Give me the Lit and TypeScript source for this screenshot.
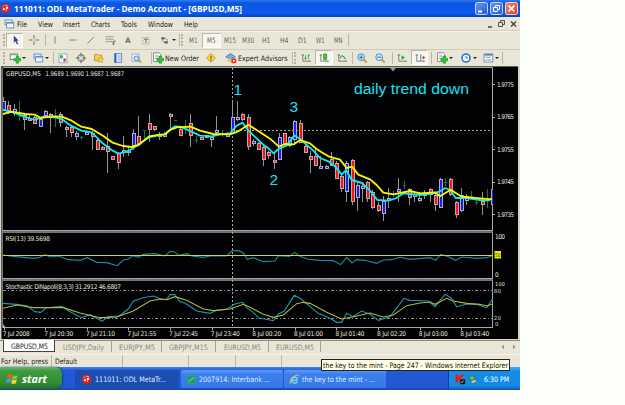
import {LitElement, html, svg, css} from 'lit';
import {customElement} from 'lit/decorators.js';
import {classMap} from 'lit/directives/class-map.js';
import {styleMap} from 'lit/directives/style-map.js';

// Chart series are stored in thirds of a pixel.
const UNIT = 3;
const STEP = 5.2;

type Kind = 'b' | 'r' | 'g';
type Candle = [number, number, number, number, Kind];

// high, body top, body bottom, low, kind
const CANDLES: Candle[] = [
  [98, 110, 138, 140, 'b'], [110, 122, 140, 150, 'r'], [120, 135, 150, 155, 'b'],
  [110, 155, 155, 172, 'g'], [148, 152, 168, 198, 'r'], [150, 162, 166, 170, 'r'],
  [155, 160, 179, 181, 'r'], [158, 165, 188, 190, 'b'], [137, 140, 156, 160, 'b'],
  [147, 150, 158, 208, 'r'], [135, 155, 155, 190, 'g'], [145, 150, 178, 188, 'r'],
  [185, 190, 198, 218, 'r'], [185, 190, 208, 218, 'r'], [200, 208, 218, 228, 'b'],
  [216, 218, 218, 228, 'g'], [198, 203, 208, 208, 'b'], [200, 208, 218, 258, 'r'],
  [225, 228, 258, 258, 'r'], [245, 248, 258, 258, 'r'], [208, 245, 265, 326, 'r'],
  [275, 277, 287, 287, 'r'], [265, 268, 297, 316, 'r'], [215, 257, 263, 278, 'b'],
  [245, 257, 262, 275, 'b'], [195, 208, 245, 258, 'b'], [157, 217, 240, 240, 'r'],
  [197, 199, 199, 230, 'g'], [150, 178, 198, 235, 'r'], [185, 187, 199, 200, 'r'],
  [205, 210, 217, 229, 'b'], [205, 210, 212, 212, 'b'], [147, 150, 160, 200, 'r'],
  [168, 169, 169, 170, 'g'], [190, 196, 217, 217, 'r'], [168, 188, 188, 210, 'g'],
  [149, 178, 217, 248, 'r'], [215, 227, 227, 237, 'g'], [218, 220, 227, 228, 'r'],
  [212, 213, 217, 218, 'b'], [215, 220, 227, 248, 'b'], [157, 198, 207, 212, 'b'],
  [198, 209, 209, 218, 'g'], [205, 210, 217, 218, 'b'], [110, 160, 210, 210, 'b'],
  [110, 160, 168, 170, 'b'], [148, 150, 168, 172, 'r'], [149, 160, 248, 258, 'r'],
  [225, 230, 239, 247, 'b'], [235, 238, 258, 258, 'r'], [240, 248, 287, 306, 'r'],
  [262, 265, 277, 285, 'r'], [265, 287, 297, 316, 'r'], [208, 218, 287, 287, 'b'],
  [207, 208, 240, 248, 'r'], [215, 218, 246, 248, 'b'], [168, 170, 228, 238, 'b'],
  [168, 178, 238, 238, 'r'], [238, 246, 266, 267, 'r'], [262, 277, 287, 326, 'r'],
  [250, 276, 306, 306, 'r'], [275, 305, 315, 316, 'b'], [303, 305, 315, 315, 'b'],
  [265, 285, 305, 305, 'r'], [290, 296, 345, 346, 'r'], [330, 335, 374, 385, 'r'],
  [290, 296, 384, 413, 'b'], [285, 287, 413, 422, 'r'], [350, 364, 403, 442, 'b'],
  [355, 365, 373, 413, 'b'], [350, 353, 404, 414, 'r'], [378, 384, 433, 434, 'r'],
  [415, 422, 442, 443, 'r'], [395, 412, 451, 472, 'b'], [373, 403, 408, 433, 'r'],
  [380, 390, 390, 400, 'g'], [343, 374, 384, 413, 'b'], [352, 363, 363, 375, 'g'],
  [373, 375, 403, 423, 'r'], [385, 390, 394, 413, 'b'], [385, 403, 412, 413, 'b'],
  [378, 388, 395, 404, 'b'], [372, 375, 393, 413, 'r'], [385, 393, 423, 442, 'r'],
  [343, 346, 432, 432, 'b'], [343, 354, 354, 365, 'g'], [343, 346, 394, 395, 'r'],
  [410, 413, 452, 461, 'r'], [373, 393, 442, 443, 'b'], [390, 395, 412, 422, 'b'],
  [382, 397, 397, 402, 'g'], [400, 413, 413, 423, 'g'], [383, 412, 422, 452, 'r'],
  [375, 405, 405, 433, 'g'], [372, 375, 422, 432, 'b'],
];

const FAST_MA = '11,138 42,146 73,158 104,168 130,158 166,160 185,165 213,185 244,200 275,205 306,236 338,260 355,269 385,262 410,245 447,220 480,213 495,211 509,198 525,187 540,188 560,196 600,215 635,217 660,211 690,208 710,185 728,176 745,200 775,228 790,242 805,253 821,268 835,255 860,245 883,214 900,225 940,260 960,282 985,292 1008,310 1025,332 1038,318 1055,348 1086,357 1110,380 1132,408 1165,410 1190,402 1210,388 1260,393 1300,388 1320,382 1336,372 1350,378 1367,402 1400,402 1440,408 1465,410 1476,402';
const SLOW_MA = '9,150 35,143 75,150 104,152 122,162 155,157 185,158 215,170 244,188 275,195 310,216 338,236 369,246 395,249 416,243 447,217 480,212 495,211 510,198 530,190 572,188 600,200 640,210 690,211 715,202 745,182 785,208 810,224 837,248 855,240 882,241 900,228 930,238 950,255 965,265 985,277 1020,287 1040,312 1056,308 1075,332 1110,346 1130,363 1150,386 1180,391 1230,381 1260,388 1305,385 1320,397 1352,377 1385,398 1440,403 1476,406';
const RSI = '9,90 40,94 70,97 105,100 120,97 135,89 150,96 175,93 205,104 240,106 262,98 290,112 320,113 352,122 370,105 385,102 400,92 415,97 430,88 465,86 495,93 510,79 522,80 537,91 560,86 575,93 610,97 630,93 680,93 697,77 715,77 730,84 742,103 760,98 790,110 825,108 835,92 868,94 884,82 900,94 925,103 960,106 1000,107 1022,119 1040,97 1056,114 1070,104 1095,106 1130,115 1150,105 1175,104 1200,97 1230,103 1265,100 1290,98 1307,106 1322,88 1345,95 1367,106 1385,96 1430,100 1460,98 1478,92';
const STOCH_K = '9,235 50,238 80,242 105,260 122,262 140,248 185,244 210,260 245,278 270,269 290,280 306,289 325,275 355,274 385,252 400,228 430,218 460,213 490,224 500,222 512,208 525,209 540,230 555,234 590,258 630,265 650,256 680,253 705,237 728,232 740,248 760,262 775,278 820,287 835,267 852,259 883,211 900,220 955,265 990,280 1010,292 1025,292 1040,265 1058,275 1085,258 1110,268 1135,286 1170,275 1212,220 1230,226 1285,228 1305,245 1335,208 1353,218 1370,245 1400,237 1430,238 1460,248 1478,222';
const STOCH_D = '9,250 50,240 100,248 140,248 190,248 240,264 300,278 350,276 400,258 450,228 480,222 500,224 525,215 560,226 610,252 640,257 690,252 730,238 750,247 790,268 820,277 850,270 890,236 910,232 930,235 980,262 1025,282 1060,275 1110,264 1150,276 1180,270 1220,242 1260,234 1290,231 1305,238 1340,220 1360,228 1400,235 1440,238 1460,243 1478,237';

const PRICES: [string, number][] = [
  ['1.9775', 84], ['1.9765', 116.6], ['1.9755', 149], ['1.9745', 181.6], ['1.9735', 214],
];

const TIMES = [
  '7 Jul 2008', '7 Jul 20:30', '7 Jul 21:10', '7 Jul 21:55', '7 Jul 22:45', '7 Jul 23:40',
  '8 Jul 00:20', '8 Jul 01:00', '8 Jul 01:40', '8 Jul 02:20', '8 Jul 03:00', '8 Jul 03:40',
];

// label, gap before it, label width
const MENUS: [string, number, number][] = [
  ['File', 2, 10], ['View', 11, 15], ['Insert', 10, 17], ['Charts', 11, 19],
  ['Tools', 11, 16], ['Window', 11, 25], ['Help', 11, 14],
];

const TABS: [string, number, number][] = [
  ['USDJPY,Daily', 57, 41], ['EURJPY,M5', 50, 36], ['GBPJPY,M15', 54, 39],
  ['EURUSD,M5', 53, 37], ['EURUSD,M5', 52, 38],
];

const PERIODS = ['M1', 'M5', 'M15', 'M30', 'H1', 'H4', 'D1', 'W1', 'MN'];

const label = (text: string, width: number) => html`
  <svg class="label" width=${width} height="12">
    <text x="0" y="9" textLength=${width} lengthAdjust="spacingAndGlyphs">${text}</text>
  </svg>
`;

const plus = svg`<path d="M9 5h3v3h3v3h-3v3H9v-3H6V8h3z" fill="#2fc52f" stroke="#138a1c" stroke-width=".7"/>`;
const axes = svg`<path d="M3.500 3v8.500H13M2.500 4.500l1-1.500 1 1.500M12 10.500l1 1-1 1" fill="none" stroke="#5c6c68"/>`;
const sheet = svg`<path d="M2 1h7l2 2v9H2z" fill="#fff" stroke="#5c7886"/><path d="M4 4h4M4 6h5M4 8h5" stroke="#789" stroke-width=".8"/>`;

const ICONS: Record<string, unknown> = {
  arrow: svg`<path d="M6 2v9l2-2 2 4 1.500-1-2-3.500H12z" fill="#354a8c"/>`,
  cross: svg`<path d="M7.500 1v5m0 3v5M1 7.500h5m3 0h5" stroke="#777568" stroke-width="1.200"/>`,
  vline: svg`<path d="M7.500 3v9" stroke="#6b695f"/>`,
  hline: svg`<path d="M3 7.500h9" stroke="#6b695f"/>`,
  diag: svg`<path d="M3 12l8-8" stroke="#6b695f"/>`,
  fibo: svg`<path d="M2 3.500h10M2 6.500h10M2 9.500h8" stroke="#6b695f" stroke-dasharray="1.500 .6"/><path d="M11.500 14V9h3m-3 2.500h2" fill="none" stroke="#444"/>`,
  text: svg`<text x="4" y="11.500" font-size="9.500" font-weight="bold" fill="#69675e">A</text>`,
  textbox: svg`<rect x="3.500" y="4.500" width="8" height="8" fill="none" stroke="#8b897d" stroke-dasharray="1 1"/><path d="M5 6.500h5M7.500 6.500v5" stroke="#69675e" stroke-width="1.200"/>`,
  marks: svg`<path d="M3 4h4v3H3zM7 9h4v3H7z" fill="#4e5e5a"/><path d="M8 5l3 3M4 8l3 3" stroke="#4e5e5a"/>`,
  newchart: svg`<rect x="1.500" y="2.500" width="9" height="7" fill="#fff" stroke="#4b8068"/><path d="M2 3.500h8" stroke="#3d9c68"/>${plus}`,
  profiles: svg`<rect x="2.500" y="2.500" width="9" height="6" fill="#dceafc" stroke="#4f81c4"/><rect x="4.500" y="5.500" width="9" height="7" fill="#eef6ff" stroke="#4f81c4"/><path d="M5 6.500h8" stroke="#4f81c4"/>`,
  market: svg`<rect x="2.500" y="2.500" width="10" height="11" fill="#fff" stroke="#6a9fd0"/><path d="M4 7l2-3 2 3z" fill="#18a030"/><path d="M4 4h3v4H4z" fill="#2aab40"/><path d="M8 8h3v4H8z" fill="#e5372e"/>`,
  target: svg`<circle cx="7.500" cy="7.500" r="4" fill="none" stroke="#666b70" stroke-width="1.300"/><path d="M7.500 1v5m0 3v5M1 7.500h5m3 0h5" stroke="#666b70" stroke-width="1.300"/>`,
  star: svg`<path d="M2 3h4l1 1h4v7H2z" fill="#f4ce62" stroke="#b88922"/><path d="M9.500 5.500l1.300 2.500 2.700.3-2 2 .6 2.700-2.600-1.300L7 13l.5-2.700-2-2 2.700-.3z" fill="#ffd64a" stroke="#c28c1e" stroke-width=".7"/>`,
  book: svg`<path d="M3 2h9v11H3z" fill="#e4f0ff" stroke="#3e78bd"/><path d="M4.500 2v11" stroke="#2c5fae" stroke-width="2"/><path d="M7 5h4M7 7.500h4M7 10h4" stroke="#75a2d8"/>`,
  tester: svg`<rect x="2.500" y="2.500" width="9" height="9" fill="#eef5ff" stroke="#7ca3d0"/><circle cx="8" cy="8" r="3" fill="#bddcf8" stroke="#4a7cba"/><path d="M10 10l4 3" stroke="#bd8d36" stroke-width="1.800"/>`,
  order: svg`${sheet}${plus}`,
  alert: svg`<path d="M7.500 2l5.500 5.500L7.500 13 2 7.500z" fill="#ffd23b" stroke="#b98c12"/><path d="M7.500 5v3.500m0 1v1.300" stroke="#7a4c00" stroke-width="1.400"/>`,
  expert: svg`<path d="M1 6l6-4 6 4-6 3z" fill="#6bb1e8" stroke="#3876b0"/><path d="M3 8v3l4 2 3-2V8z" fill="#edc65e"/><rect x="8" y="8" width="6" height="6" rx="1" fill="#e03030"/><rect x="10" y="10" width="2" height="2" fill="#fff"/>`,
  bars: svg`${axes}<path d="M7 4v6M5.500 8H7M10.500 3v6m0-5H12" stroke="#238b38"/>`,
  candles: svg`${axes}<path d="M9 1v10" stroke="#168b1c"/><rect x="7" y="3" width="4" height="6" fill="#2ed431" stroke="#168b1c" stroke-width=".7"/>`,
  line: svg`${axes}<path d="M5 8q2-5 4-2.500l3 3" fill="none" stroke="#2e9b38" stroke-width="1.300"/>`,
  zoomin: svg`<path d="M9.500 9.500l4 3.500" stroke="#c8a23e" stroke-width="2.500"/><circle cx="6.500" cy="6.500" r="4.200" fill="#d3ebff" stroke="#4385cc" stroke-width="1.200"/><path d="M6.500 4v5M4 6.500h5" stroke="#2f6db8" stroke-width="1.300"/>`,
  zoomout: svg`<path d="M9.500 9.500l4 3.500" stroke="#c8a23e" stroke-width="2.500"/><circle cx="6.500" cy="6.500" r="4.200" fill="#d3ebff" stroke="#4385cc" stroke-width="1.200"/><path d="M4 6.500h5" stroke="#2f6db8" stroke-width="1.300"/>`,
  scroll: svg`${axes}<path d="M7 4l4 3-4 3z" fill="#27a244"/>`,
  shift: svg`${axes}<path d="M8.500 3v8" stroke="#3471bd" stroke-width="1.200"/><path d="M10 7h4M12 5v4" stroke="#df3426" stroke-width="1.200"/>`,
  indicators: svg`${sheet}${plus}`,
  clock: svg`<circle cx="7.500" cy="7.500" r="5" fill="#eef7ff" stroke="#2773cc" stroke-width="2"/><path d="M7.500 4.500v3H10" fill="none" stroke="#456"/>`,
  template: svg`<rect x="2.500" y="2.500" width="11" height="10" fill="#fff" stroke="#4b7fbf"/><path d="M3 3.500h10" stroke="#4b7fbf" stroke-width="2"/><path d="M4 7l2-1 2 1 3-1" fill="none" stroke="#d24b36"/><path d="M4 10.500l3-1 2 1 3-1.500" fill="none" stroke="#3a9a4c"/>`,
  globe: svg`<circle cx="7.500" cy="7.500" r="6.500" fill="#d32020"/><path d="M3 5.500q3-4 8-2" fill="none" stroke="#ff8b77" stroke-width="1.300"/><path d="M4 7h3l-1 3H4zM8 5h3v3H9v3H8z" fill="#fff"/>`,
  excel: svg`<rect x="2" y="2" width="11" height="11" fill="#24966d" stroke="#38a68a"/><path d="M4 11l7-7" stroke="#51c888" stroke-width="2"/>`,
  ie: svg`<path d="M11.500 8.500h-7M11.200 10A4 4 0 1 1 11.500 7.500" fill="none" stroke="#6fd0ff" stroke-width="2.200"/><path d="M2 13Q0 9 6 4t8-1" fill="none" stroke="#f3c33c" stroke-width="1.400"/>`,
  windows: svg`<path d="M2 3q3-2 5 0L6 7Q3.500 5.500 1 7z" fill="#ef5a2a"/><path d="M8 3.500q3 2 5.500 0l-1 4q-3 1.500-5.500 0z" fill="#82cf3c"/><path d="M1 8q2.500-1.500 5 0l-1 4.500q-2.500-1.500-5 0z" fill="#5b91ef"/><path d="M7 8.500q2.500 1.500 5.500 0l-1 4.500q-3 1.500-5.500 0z" fill="#fad22c"/>`,
  kaspersky: svg`<path d="M2 2h3.500v4L9 2h4L8.500 7l3.500 5H8.500L5.500 8v4H2z" fill="#ed1919"/><path d="M8 8h6v6H8z" fill="#111"/><path d="M9 12l3-2" stroke="#fff"/>`,
  eject: svg`<path d="M3 5l5-2 4 4-5 3z" fill="#62b962" stroke="#276a3c"/><path d="M6 10l6-2 1 3-5 2z" fill="#cbd0c4" stroke="#556" stroke-width=".6"/>`,
};

const icon = (name: string, size = 12) => html`
  <svg class="icon" width=${size} height=${size} viewBox="0 0 15 15">${ICONS[name]}</svg>
`;

// A cell of the toolbar, wide enough for the icon and its dropdown mark.
const tool = (name: string, width = 18.2, opts: {caret?: boolean; on?: boolean} = {}) => html`
  <span class=${classMap({tool: true, on: !!opts.on})} style=${styleMap({width: `${width}px`})}>
    ${icon(name)}${opts.caret ? html`<i class="caret"></i>` : ''}
  </span>
`;

@customElement('price-chart')
export class PriceChart extends LitElement {
  static styles = css`
    :host {
      display: block;
      height: 274px;
    }

    svg {
      display: block;
    }

    text {
      font-family: 'DejaVu Sans Condensed', 'DejaVu Sans', sans-serif;
      font-size: 6.5px;
      fill: #e2e2da;
    }

    .scale {
      font-size: 5.5px;
    }

    .note {
      font-family: 'Liberation Sans', Arial, sans-serif;
      font-size: 15.5px;
      fill: #14e4f4;
    }

    .candles {
      shape-rendering: crispEdges;
    }

    .ma {
      fill: none;
      stroke-width: 5.5;
      stroke-linejoin: round;
    }

    .thin {
      fill: none;
      stroke-width: 3.3;
    }

    .crosshair {
      stroke: #a9a9a0;
      stroke-dasharray: 2 2;
    }

    .level {
      stroke: #8c8c88;
      stroke-dasharray: 3 2 1 2;
    }
  `;

  renderCandle([high, top, bottom, low, kind]: Candle, i: number) {
    const x = Math.round(3.1 + i * STEP);
    const y = (v: number) => Math.round(64 + v / UNIT);
    if (kind === 'g') {
      return svg`<path d="M${x + 0.5} ${y(high)}V${y(low)}M${x - 1} ${y(top) + 0.5}h3" stroke="#1f7a2c"/>`;
    }
    const h = Math.max(3, y(bottom) - y(top));
    return svg`
      <path d="M${x + 0.5} ${y(high)}V${y(low)}" stroke="#92928e"/>
      <rect x=${x - 1} y=${y(top)} width="4" height=${h} fill="#b4acb4"/>
      <rect x=${x} y=${y(top) + 1} width="2" height=${h - 2} fill=${kind === 'b' ? '#1a1aff' : '#ff1010'}/>
    `;
  }

  render() {
    return html`
      <svg width="520" height="274" viewBox="0 66 520 274">
        <defs>
          <clipPath id="plot"><rect x="3" y="68" width="490" height="260"/></clipPath>
        </defs>
        <rect x="0" y="66" width="520" height="274" fill="#d8d5c8"/>
        <rect x="1" y="66" width="517" height="273" fill="#020204"/>
        <path d="M1 66.500H518M1.500 66V339" stroke="#60605a"/>
        <path d="M3 67.500H492.500V328" fill="none" stroke="#aaa9a0"/>
        <path d="M2.500 68V328" stroke="#77776c"/>
        <path d="M3 327.500H493" stroke="#aaa9a0"/>
        ${[230, 278].map((y) => svg`
          <rect x="2" y=${y} width="491" height="3" fill="#77756f"/>
          <path d=${`M2 ${y + 0.5}H493`} stroke="#aaa9a0"/>
          <path d=${`M2 ${y + 1.5}H493`} stroke="#62628f" stroke-dasharray="2 1"/>
        `)}

        <g clip-path="url(#plot)">
          <path class="crosshair" d="M232.500 68V328M232 130.500H493"/>
          <path class="level" d="M3 290.500H493M3 318.500H493"/>
          <g class="candles">${CANDLES.map((c, i) => this.renderCandle(c, i))}</g>
          <g transform="translate(0 64) scale(.33333)">
            <polyline class="ma" points=${FAST_MA} stroke="#0ceaf2"/>
            <polyline class="ma" points=${SLOW_MA} stroke="#fcf800"/>
          </g>
          <g transform="translate(0 225) scale(.33333)">
            <polyline class="thin" points=${RSI} stroke="#198ca8"/>
            <path class="thin" d="M9 91.500H1479" stroke="#ccd248"/>
            <polyline class="thin" points=${STOCH_K} stroke="#1c98b4"/>
            <polyline class="thin" points=${STOCH_D} stroke="#b5b53e"/>
          </g>
        </g>

        <path d="M390 68h6l-3 3.500z" fill="#8592b4"/>
        <path d="M3 328v-4l3 4z" fill="#a9b4d0"/>

        <text x="6" y="75.500" textLength="35" lengthAdjust="spacingAndGlyphs">GBPUSD,M5</text>
        <text x="45.500" y="75.500" textLength="78.500" lengthAdjust="spacingAndGlyphs">1.9689 1.9690 1.9687 1.9687</text>
        <text x="5.500" y="241" textLength="44.500">RSI(13) 39.5698</text>
        <text x="5.500" y="289" textLength="115.500">Stochastic DiNapoli(8,3,3) 31.2912 46.6807</text>

        ${PRICES.map(([price, y]) => svg`
          <path d=${`M493 ${Math.round(y) + 0.5}h2`} stroke="#aaa9a0"/>
          <text x="497" y=${y + 2.5} textLength="17">${price}</text>
        `)}
        <text x="495" y="239" textLength="10">100</text>
        <rect x="494.500" y="251" width="6.500" height="7.500" fill="#f0ee00"/>
        <text class="scale" x="495" y="257" style="fill:#33330a" textLength="5.500" lengthAdjust="spacingAndGlyphs">50</text>
        <text x="495" y="277">0</text>
        <text class="scale" x="495" y="286.300" textLength="10">100</text>
        <text class="scale" x="494" y="293" textLength="7">80</text>
        <text class="scale" x="494" y="319.500" textLength="7">20</text>
        <text class="scale" x="495" y="326.300">0</text>

        ${TIMES.map((time, i) => {
          const x = 3.5 + i * 41.6;
          return svg`
            <path d=${`M${Math.round(x) + 0.5} 328v2.500`} stroke="#aaa9a0"/>
            <text x=${Math.max(2.5, x - 0.8)} y="335.800" textLength=${i ? 29 : 27}>${time}</text>
          `;
        })}

        <text class="note" x="233.500" y="95">1</text>
        <text class="note" x="269.500" y="184.500">2</text>
        <text class="note" x="289.500" y="112">3</text>
        <text class="note" x="354" y="93.500" textLength="115" lengthAdjust="spacingAndGlyphs">daily trend down</text>
      </svg>
    `;
  }
}

@customElement('app-root')
export class AppRoot extends LitElement {
  static styles = css`
    :host {
      display: block;
      width: 625px;
      height: 405px;
      background: #fdfffa;
      overflow: hidden;
      font-family: 'DejaVu Sans Condensed', 'DejaVu Sans', sans-serif;
      font-size: 7.5px;
      color: #1c1c1c;
    }

    .screen {
      position: relative;
      width: 520px;
      display: flex;
      flex-direction: column;
      background: #e9e6d8;
    }

    .row {
      display: flex;
      align-items: center;
      box-sizing: border-box;
    }

    svg {
      display: block;
      flex: none;
    }

    .label {
      overflow: visible;
      fill: currentColor;
    }

    .title {
      height: 17px;
      padding: 0 2px 0 0;
      background: linear-gradient(#2a7cf4, #0b55de 18%, #0a5ced 75%, #0842c4);
      color: #fff;
    }

    .title .label {
      font-family: 'Open Sans', sans-serif;
      font-size: 9.5px;
      font-weight: 700;
      margin-left: 3px;
    }

    .spacer {
      flex: 1;
    }

    .win {
      display: flex;
      gap: 2px;
    }

    .win svg {
      border-radius: 2px;
      background: linear-gradient(135deg, #6b98f2, #2458d8);
    }

    .win .close {
      background: linear-gradient(135deg, #f08e74, #d23c1e);
    }

    .menu {
      height: 14px;
      padding: 0 0 0 3px;
      border-bottom: 1px solid #d2cfc0;
    }

    .tools {
      height: 17.5px;
      padding-left: 2px;
      border-top: 1px solid #f6f4ea;
    }

    .tools.second {
      border-top-color: #cfccbe;
    }

    .tool {
      display: flex;
      align-items: center;
      justify-content: center;
      flex: none;
      height: 15px;
      box-sizing: border-box;
      color: #66645a;
    }

    .tool.on {
      background: #f6f5ee;
      border: 1px solid #b9b6a8;
      border-right-color: #fff;
      border-bottom-color: #fff;
    }

    .caret {
      border: 2px solid transparent;
      border-top-color: #222;
      border-bottom: 0;
      margin-left: 1px;
    }

    .grip {
      flex: none;
      width: 2px;
      height: 12px;
      margin: 0 1px;
      border-left: 2px dotted #b5b2a5;
      box-sizing: border-box;
    }

    .sep {
      flex: none;
      width: 1px;
      height: 12px;
      background: #bab7a8;
    }

    .tabs {
      height: 14px;
      padding-left: 3px;
      border-top: 1px solid #8b897f;
      color: #8a887d;
      align-items: flex-start;
    }

    .tab {
      display: flex;
      align-items: center;
      justify-content: center;
      flex: none;
      height: 11px;
      box-sizing: border-box;
      border-right: 1px solid #a8a598;
    }

    .tab.active {
      width: 52px;
      height: 12px;
      margin-top: -1px;
      background: #fff;
      color: #222;
      border: solid #444;
      border-width: 0 1px 1px;
    }

    .scrolls {
      margin: 2px 3px 0 0;
    }

    .status {
      height: 13px;
      padding-left: 1px;
      border-top: 1px solid #f5f3ea;
    }

    .taskbar {
      height: 22.5px;
      background: linear-gradient(#3f83ee, #2459d6 15%, #2358d2 85%, #1b45ae);
      color: #fff;
    }

    .start {
      width: 62px;
      height: 22px;
      padding-left: 6px;
      gap: 3px;
      border-radius: 0 7px 7px 0;
      background: linear-gradient(#68b468, #3c9a3c 20%, #328b32 75%, #246c26);
      box-shadow: 1px 0 2px #163c9c;
    }

    .start .label {
      font-family: 'Open Sans', sans-serif;
      font-size: 11px;
      font-weight: 700;
      font-style: italic;
      margin-top: 3px;
    }

    .task {
      width: 102px;
      height: 18px;
      margin: 2px 0 0 1.5px;
      padding-left: 5px;
      gap: 2px;
      border-radius: 2px;
      background: linear-gradient(#5a9cf8, #3b7fee 25%, #3878e6);
      color: #dcebff;
    }

    .task.pressed {
      margin-left: 13px;
      width: 104px;
      padding-left: 6px;
      gap: 3px;
      background: #1c4eb2;
    }

    .tray {
      width: 72px;
      height: 22px;
      padding: 2px 0 0 5px;
      border-left: 1px solid #12389c;
      background: linear-gradient(#3ab4f6, #148ce6 20%, #138be4 85%, #0e67bc);
    }

    .tip {
      position: absolute;
      left: 321px;
      top: 359px;
      width: 189px;
      height: 12px;
      box-sizing: border-box;
      padding-left: 1px;
      border: 1px solid #222;
      background: #ffffe4;
      color: #111;
    }
  `;

  renderTitle() {
    return html`
      <div class="row title">
        ${icon('globe', 11)}
        ${label('111011: ODL MetaTrader - Demo Account - [GBPUSD,M5]', 228)}
        <span class="spacer"></span>
        <span class="win">
          <svg width="13" height="13"><rect x=".5" y=".5" width="12" height="12" rx="2" fill="none" stroke="#c3d5fa"/><path d="M3 9.500h4" stroke="#fff" stroke-width="2"/></svg>
          <svg width="13" height="13"><rect x=".5" y=".5" width="12" height="12" rx="2" fill="none" stroke="#c3d5fa"/><path d="M5.500 5V3.500h4v4H8M3.500 5.500h4v4h-4z" fill="none" stroke="#fff"/></svg>
          <svg class="close" width="13" height="13"><rect x=".5" y=".5" width="12" height="12" rx="2" fill="none" stroke="#f6cfc4"/><path d="M3.500 3.500l6 6m0-6l-6 6" stroke="#fff" stroke-width="1.600"/></svg>
        </span>
      </div>
    `;
  }

  renderMenu() {
    return html`
      <div class="row menu">
        ${icon('profiles', 12)}
        ${MENUS.map(([text, gap, width]) => html`
          <span style=${styleMap({paddingLeft: `${gap}px`})}>${label(text, width)}</span>
        `)}
        <span class="spacer"></span>
        <svg width="36" height="12">
          <path d="M4 9h4" stroke="#444" stroke-width="1.500"/>
          <path d="M16.500 4.500v-2h4v4h-2M14.500 4.500h4v4h-4z" fill="none" stroke="#55534a"/>
          <path d="M27 3.500l5 5m0-5l-5 5" stroke="#444" stroke-width="1.400"/>
        </svg>
      </div>
    `;
  }

  renderDrawingTools() {
    return html`
      <div class="row tools">
        <i class="grip"></i>
        ${tool('arrow', 17, {on: true})}${tool('cross', 22)}
        <i class="sep"></i>
        ${['vline', 'hline', 'diag', 'fibo', 'text', 'textbox'].map((name) => tool(name))}
        ${tool('marks', 24, {caret: true})}
        <i class="sep"></i><i class="grip"></i>
        ${PERIODS.map((period) => html`
          <span class=${classMap({tool: true, on: period === 'M5'})} style="width:18.2px">
            ${label(period, period.length > 2 ? 12 : 8.5)}
          </span>
        `)}
        <i class="sep"></i>
      </div>
    `;
  }

  renderMainTools() {
    return html`
      <div class="row tools second">
        <i class="grip"></i>
        ${tool('newchart', 22, {caret: true})}${tool('profiles', 25, {caret: true})}
        <i class="sep"></i>
        ${['market', 'target', 'star', 'book', 'tester'].map((name) => tool(name))}
        <span style="width:6px"></span>
        <i class="sep"></i>
        ${tool('order', 13)}${label('New Order', 34)}
        ${tool('alert', 24)}${tool('expert', 15.5)}${label('Expert Advisors', 49.5)}
        <span style="width:4px"></span>
        <i class="sep"></i><i class="grip"></i>
        ${tool('bars')}${tool('candles', 18.2, {on: true})}${tool('line')}
        <i class="sep"></i>
        ${tool('zoomin')}${tool('zoomout')}
        <span style="width:3px"></span>
        <i class="sep"></i>
        ${tool('scroll')}${tool('shift', 17, {on: true})}
        <span style="width:3px"></span>
        <i class="sep"></i>
        ${tool('indicators', 25, {caret: true})}
        ${tool('clock', 22, {caret: true})}
        ${tool('template', 23, {caret: true})}
        <i class="sep"></i>
      </div>
    `;
  }

  renderTabs() {
    return html`
      <div class="row tabs">
        <span class="tab active">${label('GBPUSD,M5', 37)}</span>
        ${TABS.map(([text, width, textWidth]) => html`
          <span class="tab" style=${styleMap({width: `${width}px`})}>${label(text, textWidth)}</span>
        `)}
        <span class="spacer"></span>
        <svg class="scrolls" width="16" height="8"><path d="M3 1.500v5L.5 4zM12 1.500v5L14.500 4z" fill="#98968b"/></svg>
      </div>
    `;
  }

  renderStatus() {
    return html`
      <div class="row status">
        ${label('For Help, press', 47)}
        <span style="width:3px"></span>
        <i class="sep"></i>
        <span style="width:3px"></span>
        ${label('Default', 22)}
        ${[45, 65, 46, 45].map((gap) => html`
          <span style=${styleMap({width: `${gap}px`})}></span><i class="sep"></i>
        `)}
      </div>
    `;
  }

  renderTaskbar() {
    return html`
      <div class="row taskbar">
        <div class="row start">${icon('windows', 13)}${label('start', 25)}</div>
        <div class="row task pressed">${icon('globe', 11)}${label('111011: ODL MetaTr...', 71)}</div>
        <div class="row task">${icon('excel', 11)}${label('2007914: Interbank ...', 71)}</div>
        <div class="row task">${icon('ie', 11)}${label('the key to the mint - ...', 73)}</div>
        <span class="spacer"></span>
        <div class="row tray">
          ${icon('kaspersky', 12)}${icon('eject', 12)}
          <span style="width:6px"></span>
          ${label('6:30 PM', 25)}
        </div>
      </div>
    `;
  }

  render() {
    return html`
      <div class="screen">
        ${this.renderTitle()}
        ${this.renderMenu()}
        ${this.renderDrawingTools()}
        ${this.renderMainTools()}
        <price-chart></price-chart>
        ${this.renderTabs()}
        ${this.renderStatus()}
        ${this.renderTaskbar()}
        <div class="row tip">${label('the key to the mint - Page 247 - Windows Internet Explorer', 185)}</div>
      </div>
    `;
  }
}
